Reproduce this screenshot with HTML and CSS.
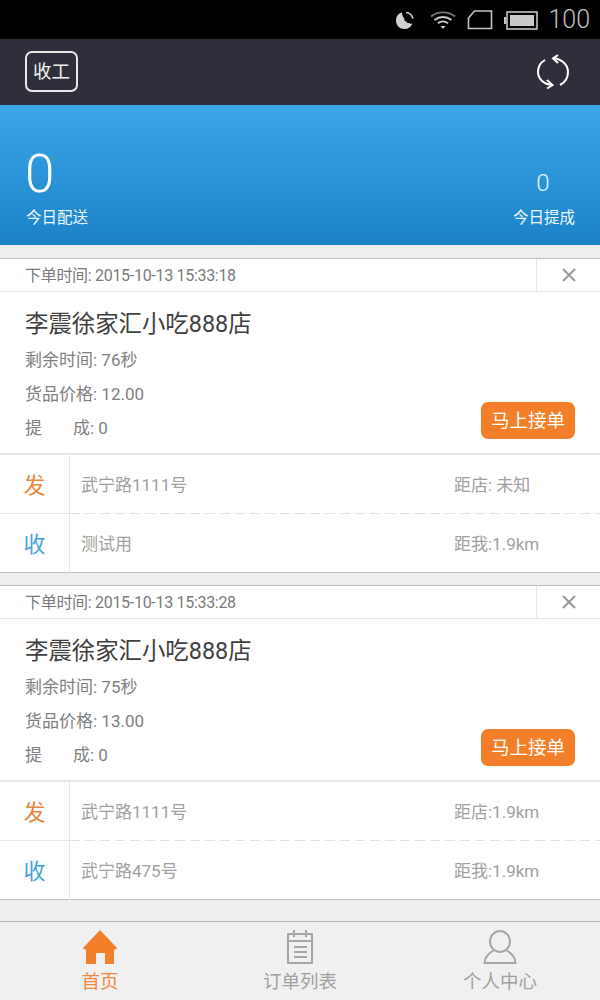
FILE: index.html
```html
<!DOCTYPE html>
<html lang="zh-CN">
<head>
  <meta charset="UTF-8">
  <meta name="viewport" content="width=device-width, initial-scale=1.0">
  <title>首页</title>
  <link rel="stylesheet" href="styles.css">
</head>
<body>
  <!-- Status bar -->
  <div class="status-bar">
    <svg class="st-moon" width="20" height="20" viewBox="0 0 20 20">
      <path d="M7 2.500C3 3.500 1 6.500 1 10.500 1 15.500 4.800 19 9.500 19c3.800 0 6.700-2 8-5.500-1.200.6-2.600.4-3.300-.5-1.200.4-2.500-.2-2.800-1.500-1.500-.2-2.400-1.500-2-3C8.200 7.600 7 5 7 2.500z" fill="#d0d0d0"/>
      <path d="M11 2.500c3.300.3 6 2.600 7 6" fill="none" stroke="#c8c8c8" stroke-width="1.700"/>
    </svg>
    <svg class="st-wifi" width="26" height="20" viewBox="0 0 26 20">
      <path d="M1 6.500C7.500 1 18.500 1 25 6.500" fill="none" stroke="#777" stroke-width="1.800"/>
      <path d="M4.500 10C9.500 6 16.500 6 21.500 10" fill="none" stroke="#ccc" stroke-width="1.800"/>
      <path d="M8 13.300c3-2.300 7-2.300 10 0" fill="none" stroke="#ccc" stroke-width="1.800"/>
      <path d="M10.500 16h5L13 19z" fill="#ccc"/>
    </svg>
    <svg class="st-sim" width="26" height="20" viewBox="0 0 26 20">
      <path d="M7.500 1H24.500V18.500H1.500V8z" fill="none" stroke="#c4c4c4" stroke-width="1.600"/>
    </svg>
    <svg class="st-battery" width="34" height="20" viewBox="0 0 34 20">
      <rect x="0" y="7" width="2" height="7" fill="#c4c4c4"/>
      <rect x="3" y="2" width="30" height="17" fill="none" stroke="#c4c4c4" stroke-width="1.600"/>
      <rect x="6" y="5" width="24" height="11" fill="#c8c8c8"/>
    </svg>
    <span class="st-level">100</span>
  </div>

  <!-- Top bar -->
  <header class="nav-bar">
    <button class="btn-off">收工</button>
    <svg class="icon-refresh" width="34" height="38" viewBox="0 0 34 38">
      <path d="M9 7C4.500 9.500 2 14 2 19c0 6.500 5.500 12.500 14 13" fill="none" stroke="#fff" stroke-width="2"/>
      <path d="M17 5c8.500 1 15 6.500 15 14 0 5.500-3 10.500-8 13" fill="none" stroke="#fff" stroke-width="2"/>
      <path d="M22 2L17 5.300 22 10" fill="none" stroke="#fff" stroke-width="2"/>
      <path d="M11 27L16.500 32 11 35.500" fill="none" stroke="#fff" stroke-width="2"/>
    </svg>
  </header>

  <!-- Today's summary -->
  <section class="summary">
    <div class="sum-left">
      <div class="sum-num-lg">0</div>
      <div class="sum-label">今日配送</div>
    </div>
    <div class="sum-right">
      <div class="sum-num">0</div>
      <div class="sum-label">今日提成</div>
    </div>
  </section>

  <main class="orders">
    <article class="order">
      <div class="order-head">
        <span class="order-time">下单时间: 2015-10-13 15:33:18</span>
        <span class="order-close">
          <svg width="16" height="16" viewBox="0 0 16 16"><path d="M2 2L14 14M14 2L2 14" stroke="#999" stroke-width="2"/></svg>
        </span>
      </div>
      <div class="order-body">
        <h3 class="shop">李震徐家汇小吃888店</h3>
        <p class="info">剩余时间: 76秒</p>
        <p class="info">货品价格: 12.00</p>
        <p class="info"><span class="spread">提</span>成: 0</p>
        <button class="btn-take">马上接单</button>
      </div>
      <div class="addr-row dashed">
        <span class="tag tag-send">发</span>
        <span class="addr">武宁路1111号</span>
        <span class="dist">距店: 未知</span>
      </div>
      <div class="addr-row">
        <span class="tag tag-recv">收</span>
        <span class="addr">测试用</span>
        <span class="dist">距我:1.9km</span>
      </div>
    </article>

    <article class="order">
      <div class="order-head">
        <span class="order-time">下单时间: 2015-10-13 15:33:28</span>
        <span class="order-close">
          <svg width="16" height="16" viewBox="0 0 16 16"><path d="M2 2L14 14M14 2L2 14" stroke="#999" stroke-width="2"/></svg>
        </span>
      </div>
      <div class="order-body">
        <h3 class="shop">李震徐家汇小吃888店</h3>
        <p class="info">剩余时间: 75秒</p>
        <p class="info">货品价格: 13.00</p>
        <p class="info"><span class="spread">提</span>成: 0</p>
        <button class="btn-take">马上接单</button>
      </div>
      <div class="addr-row dashed">
        <span class="tag tag-send">发</span>
        <span class="addr">武宁路1111号</span>
        <span class="dist">距店:1.9km</span>
      </div>
      <div class="addr-row">
        <span class="tag tag-recv">收</span>
        <span class="addr">武宁路475号</span>
        <span class="dist">距我:1.9km</span>
      </div>
    </article>
  </main>

  <!-- Bottom tabs -->
  <nav class="tab-bar">
    <div class="tab active">
      <svg width="36" height="36" viewBox="0 0 36 36">
        <path d="M18 0L35 18 33.500 19.500H32V34H23V23H14V34H4V19.500H2.500L1 18z" fill="#f47f2b"/>
      </svg>
      <span>首页</span>
    </div>
    <div class="tab">
      <svg width="36" height="36" viewBox="0 0 36 36">
        <path d="M6 4H30V33H6z" fill="none" stroke="#a6a6a6" stroke-width="2"/>
        <path d="M12 0V7M24 0V7M6 11H30M12 17H25M12 22H25M12 27H25" fill="none" stroke="#a6a6a6" stroke-width="2"/>
      </svg>
      <span>订单列表</span>
    </div>
    <div class="tab">
      <svg width="36" height="36" viewBox="0 0 36 36">
        <ellipse cx="18" cy="11.500" rx="10" ry="10.500" fill="none" stroke="#a6a6a6" stroke-width="2"/>
        <path d="M12 20C7 23 2.500 27 2.500 33H33.500C33.500 27 29 23 24 20" fill="none" stroke="#a6a6a6" stroke-width="2"/>
      </svg>
      <span>个人中心</span>
    </div>
  </nav>
</body>
</html>
```

FILE: styles.css
```css
/* General */
* {
  box-sizing: border-box;
}
body {
  margin: 0;
  width: 600px;
  height: 1000px;
  overflow: hidden;
  display: flex;
  flex-direction: column;
  background: #eeeeee;
  font-family: Roboto, "Noto Sans CJK SC", sans-serif;
  color: #666;
}

/* Status bar */
.status-bar {
  height: 39px;
  background: #000;
  display: flex;
  align-items: center;
  justify-content: flex-end;
  padding-right: 10px;
  flex-shrink: 0;
}
.st-moon {
  margin-right: 15px;
}
.st-wifi {
  margin-right: 11px;
}
.st-sim {
  margin-right: 11px;
}
.st-battery {
  margin-right: 10px;
}
.st-level {
  font-size: 25px;
  font-weight: 300;
  color: #c0c0c0;
}

/* Top bar */
.nav-bar {
  height: 66px;
  background: #2f2f3b;
  display: flex;
  align-items: center;
  justify-content: space-between;
  padding: 0 30px 0 25px;
  flex-shrink: 0;
}
.btn-off {
  width: 53px;
  height: 41px;
  padding: 0 0 4px;
  margin-top: -1px;
  border: 2px solid #e8e8e8;
  border-radius: 7px;
  background: transparent;
  color: #f0f0f0;
  font: 18.500px Roboto, "Noto Sans CJK SC", sans-serif;
}

/* Summary */
.summary {
  height: 140px;
  background: linear-gradient(#3ca6e8, #1b82c8);
  display: flex;
  align-items: flex-end;
  justify-content: space-between;
  padding: 0 25px 16px 26px;
  color: #fff;
  flex-shrink: 0;
}
.sum-num-lg {
  font-size: 53px;
  font-weight: 300;
  line-height: 58px;
  margin-bottom: 4px;
  margin-left: -1px;
}
.sum-num {
  font-size: 24px;
  font-weight: 300;
  line-height: 28px;
  margin-bottom: 10px;
  padding-right: 2px;
  text-align: center;
  color: #e4f2fb;
}
.sum-label {
  font-size: 15.500px;
  line-height: 22px;
  color: #eef7fd;
}

/* Orders */
.orders {
  flex: 1;
  padding-top: 13px;
}
.order {
  background: #fff;
  border-top: 1px solid #bdbdbd;
  border-bottom: 1px solid #bdbdbd;
  margin-bottom: 12px;
  height: 315px;
}
.order-head {
  height: 33px;
  display: flex;
  justify-content: space-between;
  align-items: stretch;
  border-bottom: 1px solid #e6e6e6;
  padding-left: 25px;
}
.order-time {
  font-size: 16px;
  letter-spacing: -0.3px;
  line-height: 33px;
  color: #7a7a7a;
}
.order-close {
  width: 64px;
  border-left: 1px solid #e6e6e6;
  display: flex;
  align-items: center;
  justify-content: center;
}
.order-body {
  position: relative;
  height: 163px;
  padding: 15px 25px 0;
  border-bottom: 2px solid #e6e6e6;
}
.shop {
  margin: 0 0 2px;
  font-size: 23.400px;
  font-weight: 400;
  line-height: 34px;
  color: #404040;
}
.info {
  margin: 0;
  font-size: 17px;
  line-height: 34px;
  color: #808080;
}
.spread {
  margin-right: 31px;
}
/* floats over the bottom corner of the order body */
.btn-take {
  position: absolute;
  right: 25px;
  bottom: 14px;
  width: 94px;
  height: 37px;
  padding: 0 0 4px;
  border: none;
  border-radius: 7px;
  background: #f47f2b;
  color: #fff;
  font: 18.500px Roboto, "Noto Sans CJK SC", sans-serif;
}
.addr-row {
  height: 59px;
  display: flex;
  align-items: center;
  font-size: 17px;
  color: #a0a0a0;
}
/* solid under the tag cell, long dashes across the rest */
.addr-row.dashed {
  background:
    linear-gradient(#e8e8e8, #e8e8e8) 0 100% / 70px 1px no-repeat,
    repeating-linear-gradient(90deg, #e2e2e2 0 10px, transparent 10px 15px) 70px 100% / 530px 1px no-repeat;
}
.tag {
  width: 70px;
  height: 100%;
  padding-bottom: 4px;
  border-right: 1px solid #e6e6e6;
  display: flex;
  align-items: center;
  justify-content: center;
  font-size: 22px;
}
.tag-send {
  color: #e8863c;
}
.tag-recv {
  color: #44a2da;
}
.addr {
  margin-left: 11px;
  padding-bottom: 2px;
  flex: 1;
}
.dist {
  width: 146px;
  padding-bottom: 2px;
}

/* Bottom tabs */
.tab-bar {
  height: 79px;
  background: #f0f0f0;
  border-top: 1px solid #b5b5b5;
  display: flex;
  flex-shrink: 0;
}
.tab {
  flex: 1;
  display: flex;
  flex-direction: column;
  align-items: center;
  padding-top: 8px;
  font-size: 18.500px;
  line-height: 24px;
  color: #a0a0a0;
}
.tab svg {
  margin-bottom: 4px;
}
.tab.active {
  color: #f0883e;
}
```
